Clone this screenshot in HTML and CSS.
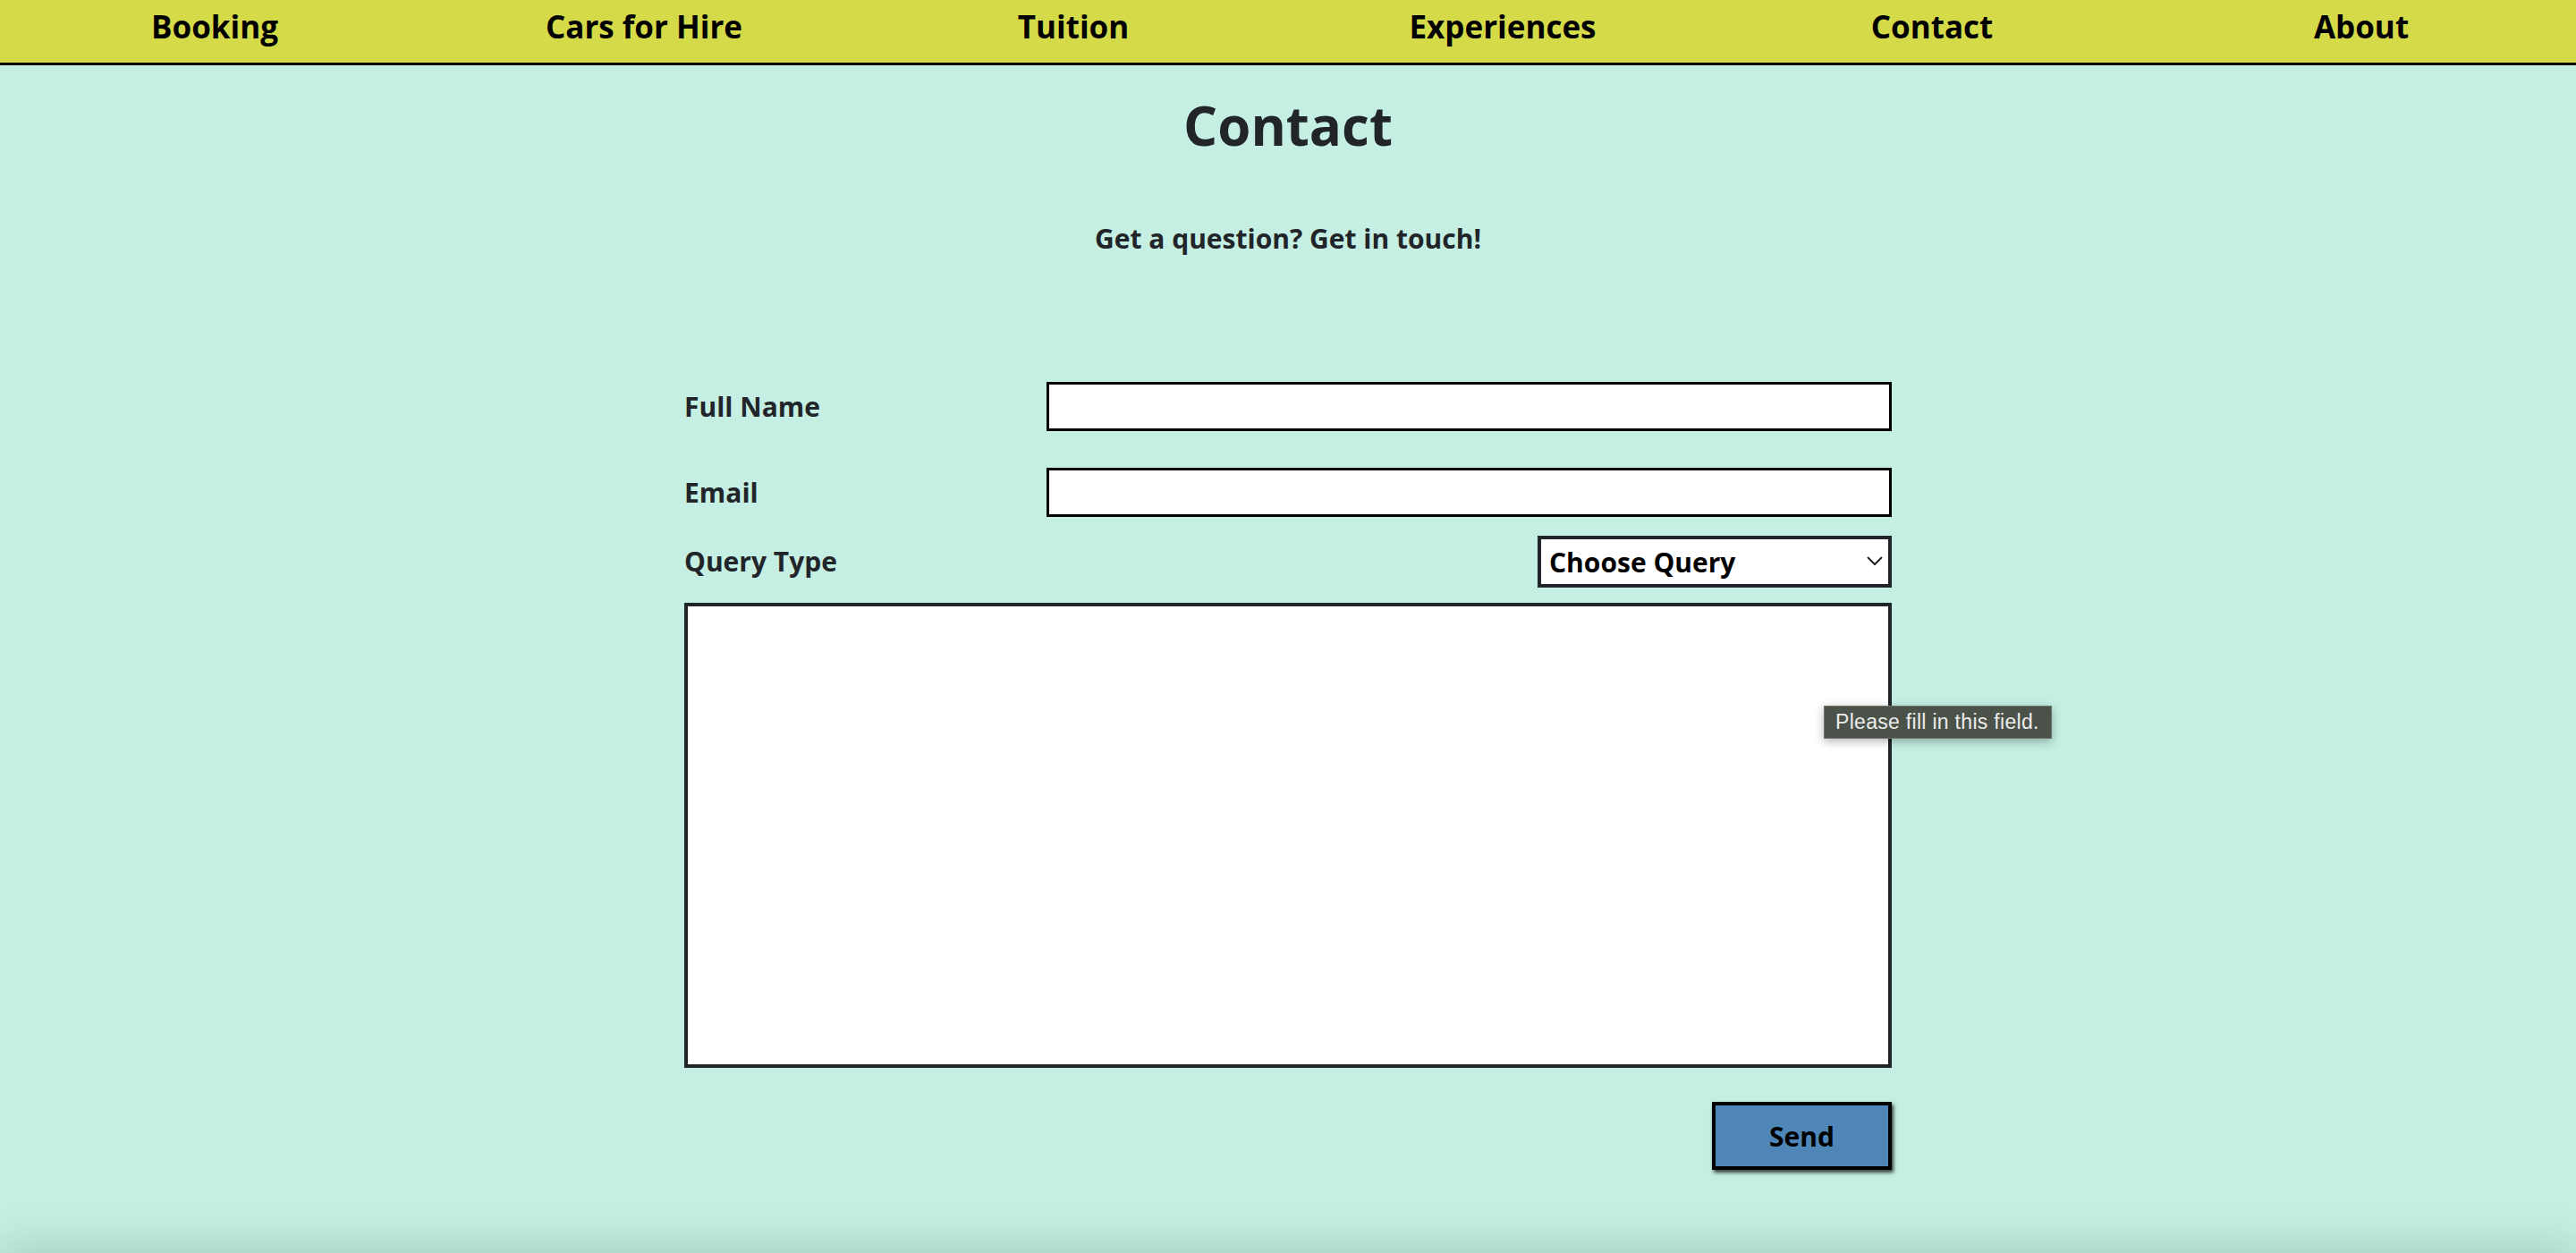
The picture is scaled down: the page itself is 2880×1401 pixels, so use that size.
FILE: index.html
```html
<!DOCTYPE html>
<html lang="en">
<head>
<meta charset="utf-8">
<title>Contact</title>
<link rel="stylesheet" href="styles.css">
</head>
<body>
<nav class="topnav">
  <a class="nav-item" href="#">Booking</a>
  <a class="nav-item" href="#">Cars for Hire</a>
  <a class="nav-item" href="#">Tuition</a>
  <a class="nav-item" href="#">Experiences</a>
  <a class="nav-item" href="#">Contact</a>
  <a class="nav-item" href="#">About</a>
</nav>
<main class="page">
  <h1 class="title">Contact</h1>
  <p class="subtitle">Get a question? Get in touch!</p>
  <form class="contact-form">
    <div class="row row-first">
      <label class="label" for="name">Full Name</label>
      <input class="text-input" id="name" type="text">
    </div>
    <div class="row row-email">
      <label class="label" for="email">Email</label>
      <input class="text-input" id="email" type="email">
    </div>
    <div class="row row-query">
      <label class="label" for="query">Query Type</label>
      <div class="select-wrap">
        <select class="select" id="query">
          <option>Choose Query</option>
        </select>
        <svg class="chevron" width="18" height="12" viewBox="0 0 18 12"><polyline points="1,2 9,10 17,2" fill="none" stroke="#222" stroke-width="2"/></svg>
      </div>
    </div>
    <textarea class="message"></textarea>
    <div class="actions">
      <button class="send" type="button">Send</button>
    </div>
    <div class="tooltip">Please fill in this field.</div>
  </form>
</main>
<footer class="footer"></footer>
</body>
</html>
```
FILE: styles.css
```css
html, body {
  margin: 0;
  padding: 0;
}
body {
  background: #c4efe2;
  font-family: "Open Sans", "Noto Sans", sans-serif;
  color: #212529;
  overflow: hidden;
}
.topnav {
  display: grid;
  grid-template-columns: repeat(6, 1fr);
  height: 70px;
  background: #d4da48;
  border-bottom: 3px solid #000;
}
.nav-item {
  display: block;
  text-align: center;
  color: #000;
  text-decoration: none;
  font-weight: 700;
  font-size: 35px;
  line-height: 60px;
  padding-bottom: 10px;
}
.page {
  min-height: 1328px;
  box-sizing: border-box;
  padding-top: 31px;
}
.title {
  margin: 0;
  text-align: center;
  font-size: 60px;
  line-height: 72px;
  font-weight: 700;
  color: #212529;
}
.subtitle {
  margin: 71px 0 0;
  text-align: center;
  font-size: 30px;
  line-height: 40px;
  font-weight: 700;
}
.contact-form {
  position: relative;
  width: 1350px;
  margin: 140px auto 0;
}
.row {
  display: flex;
  align-items: center;
  justify-content: space-between;
}
.row-email {
  margin-top: 41px;
}
.row-query {
  margin-top: 21px;
}
.label {
  font-size: 30px;
  line-height: 40px;
  font-weight: 700;
  color: #212529;
}
.text-input {
  box-sizing: border-box;
  width: 945px;
  height: 55px;
  border: 3px solid #000;
  background: #fff;
  margin: 0;
  padding: 0 10px;
  font: inherit;
  outline: none;
}
.select-wrap {
  position: relative;
  width: 396px;
  height: 58px;
}
.select {
  box-sizing: border-box;
  width: 100%;
  height: 100%;
  -webkit-appearance: none;
  appearance: none;
  border: 4px solid #212529;
  border-radius: 0;
  background: #fff;
  margin: 0;
  padding: 0 0 0 9px;
  font-family: "Open Sans", sans-serif;
  font-weight: 700;
  font-size: 30px;
  color: #000;
  outline: none;
}
.chevron {
  position: absolute;
  right: 10px;
  top: 22px;
  pointer-events: none;
}
.message {
  display: block;
  box-sizing: border-box;
  width: 100%;
  height: 520px;
  margin: 17px 0 0;
  border: 4px solid #212529;
  background: #fff;
  resize: none;
  outline: none;
}
.actions {
  display: flex;
  justify-content: flex-end;
  margin-top: 38px;
}
.send {
  box-sizing: border-box;
  width: 201px;
  height: 76px;
  background: #4e86b8;
  border: 4px solid #000;
  border-radius: 0;
  box-shadow: 2px 3px 4px rgba(0, 0, 0, 0.75);
  font-family: "Open Sans", sans-serif;
  font-weight: 700;
  font-size: 30px;
  color: #000;
  padding: 0;
}
.tooltip {
  position: absolute;
  left: 1274px;
  top: 362px;
  box-sizing: border-box;
  width: 255px;
  height: 37px;
  background: #4b5249;
  border: 1px solid #6e736c;
  color: #ececec;
  font-family: "Liberation Sans", Arial, sans-serif;
  font-size: 23px;
  line-height: 35px;
  padding-left: 12px;
  letter-spacing: 0.3px;
  white-space: nowrap;
  box-shadow: 0 3px 10px rgba(0, 0, 0, 0.3);
}
.footer {
  height: 120px;
  background: #c4efe2;
  box-shadow: 0 0 55px rgba(0, 50, 35, 0.22);
}
```
